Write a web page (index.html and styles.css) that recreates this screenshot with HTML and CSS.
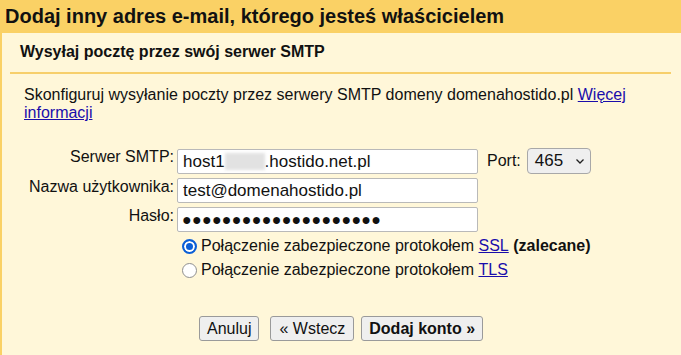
FILE: index.html
```html
<!DOCTYPE html>
<html lang="pl">

<head>
    <meta charset="UTF-8">
    <meta name="viewport" content="width=device-width, initial-scale=1.0">
    <title>Dodaj inny adres e-mail</title>
    <link rel="stylesheet" href="styles.css">
</head>

<body>
<div class="dialog">
    <h1 class="dialog-title">Dodaj inny adres e-mail, którego jesteś właścicielem</h1>

    <div class="dialog-body">
        <h2 class="step-title">Wysyłaj pocztę przez swój serwer SMTP</h2>

        <p class="intro">Skonfiguruj wysyłanie poczty przez serwery SMTP domeny domenahostido.pl <a href="#">Więcej informacji</a></p>

        <form class="smtp-form" action="#" method="post">
            <label class="field-label" for="smtp_server">Serwer SMTP:</label>
            <div class="field-row">
                <div class="field" id="smtp_server">host1<span class="redacted"></span>.hostido.net.pl</div>
                <label class="port-label" for="smtp_port">Port:</label>
                <div class="port-select" id="smtp_port">465
                    <svg class="chevron" width="10" height="7" viewBox="0 0 10 7"><path d="M1.5 1.5 L5 5 L8.5 1.5" fill="none" stroke="#222" stroke-width="1.3"/></svg>
                </div>
            </div>

            <label class="field-label" for="smtp_user">Nazwa użytkownika:</label>
            <div class="field-row">
                <input class="field" type="text" id="smtp_user" value="test@domenahostido.pl">
            </div>

            <label class="field-label" for="smtp_pass">Hasło:</label>
            <div class="field-row">
                <div class="field password" id="smtp_pass">&#9679;&#9679;&#9679;&#9679;&#9679;&#9679;&#9679;&#9679;&#9679;&#9679;&#9679;&#9679;&#9679;&#9679;&#9679;&#9679;&#9679;&#9679;&#9679;&#9679;</div>
            </div>

            <div class="security">
                <label class="radio-row">
                    <span class="radio checked"></span>
                    Połączenie zabezpieczone protokołem&nbsp;<a href="#">SSL</a>&nbsp;<b>(zalecane)</b>
                </label>
                <label class="radio-row">
                    <span class="radio"></span>
                    Połączenie zabezpieczone protokołem&nbsp;<a href="#">TLS</a>
                </label>
            </div>

            <div class="actions">
                <button type="button" class="btn btn-cancel">Anuluj</button>
                <button type="button" class="btn btn-back">« Wstecz</button>
                <button type="submit" class="btn btn-main">Dodaj konto »</button>
            </div>
        </form>
    </div>
</div>
</body>

</html>
```

FILE: styles.css
```css
body {
    margin: 0;
    font-family: 'Liberation Sans', Arial, sans-serif;
    font-size: 16px;
    color: #111;
    background-color: #fff7d9;
}

.dialog {
    height: 355px;
    border-left: 2px solid #fad165;
    background-color: #fff7d9;
}

.dialog-title {
    margin: 0;
    height: 33px;
    padding: 0 0 0 3px;
    background-color: #fad165;
    font-size: 20px;
    line-height: 32px;
    font-weight: bold;
}

.step-title {
    margin: 0 10px 0 8px;
    padding: 10px 0 11px 10px;
    border-bottom: 2px solid #f7cf6b;
    font-size: 16px;
    line-height: 18px;
    font-weight: bold;
}

.intro {
    margin: 12px 0 0 0;
    padding: 0 30px 0 22px;
    line-height: 18px;
}

a {
    color: #1a0dab;
    text-decoration: underline;
}

.smtp-form {
    display: grid;
    grid-template-columns: 172px 1fr;
    column-gap: 3px;
    row-gap: 4px;
    margin-top: 26px;
    align-items: start;
}

.field-label {
    text-align: right;
    line-height: 18px;
}

.field-row {
    display: flex;
    align-items: center;
}

.field {
    box-sizing: border-box;
    width: 301px;
    height: 25px;
    margin: 0;
    padding: 0 5px;
    border: 1px solid #b9b9b9;
    border-radius: 2px;
    background-color: #fff;
    font-family: inherit;
    font-size: 17px;
    line-height: 23px;
    color: #111;
    white-space: nowrap;
}

.redacted {
    display: inline-block;
    width: 40px;
    height: 17px;
    vertical-align: -3px;
    background-color: #e2e2e2;
    filter: blur(1.5px);
}

.password {
    font-size: 16px;
    letter-spacing: 0.3px;
    padding-left: 4px;
}

.port-label {
    margin-left: 9px;
    line-height: 18px;
}

.port-select {
    display: flex;
    align-items: center;
    gap: 12px;
    box-sizing: border-box;
    width: 64px;
    height: 26px;
    margin-left: 6px;
    padding-left: 7px;
    border: 1px solid #a8a8a8;
    border-radius: 4px;
    background-color: #efefef;
    font-size: 17px;
}

.security {
    grid-column: 2;
    margin-top: -2px;
    padding-left: 5px;
}

.radio-row {
    display: flex;
    align-items: center;
    height: 24px;
}

.radio {
    box-sizing: border-box;
    width: 15px;
    height: 15px;
    margin-right: 4px;
    border: 1px solid #8f8f8f;
    border-radius: 50%;
    background-color: #fff;
}

.radio.checked {
    border: 2px solid #0b5fd6;
    box-shadow: inset 0 0 0 2px #fff;
    background-color: #0b5fd6;
}

.actions {
    grid-column: 2;
    display: flex;
    gap: 7px;
    margin-top: 30px;
    padding-left: 22px;
}

.btn {
    height: 25px;
    padding: 0 7px;
    border: 1px solid #9a9a9a;
    border-radius: 3px;
    background-color: #efefef;
    font-family: inherit;
    font-size: 16px;
    color: #111;
}

.btn-cancel {
    margin-right: 4px;
}

.btn-back {
    padding: 0 8px;
}

.btn-main {
    font-weight: bold;
}
```
